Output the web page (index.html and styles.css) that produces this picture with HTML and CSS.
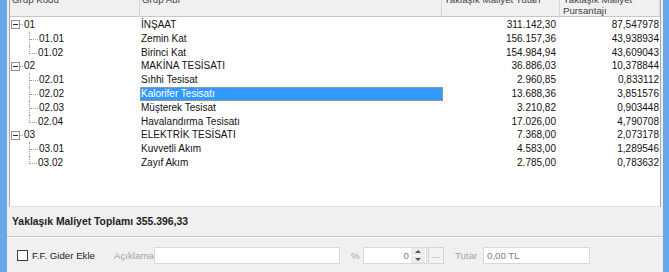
FILE: index.html
```html
<!DOCTYPE html>
<html lang="tr">
<head>
    <meta charset="UTF-8">
    <title>Yaklaşık Maliyet</title>
    <link rel="stylesheet" href="styles.css">
</head>
<body>
    <div class="window">
        <div class="tree-box">
            <div class="grid-head">
                <div class="hcell">Grup Kodu</div>
                <div class="hcell">Grup Adı</div>
                <div class="hcell">Yaklaşık Maliyet Tutarı</div>
                <div class="hcell">Yaklaşık Maliyet<br>Pursantajı</div>
            </div>
            <div class="rows">
                <div class="row">
                    <div class="code"><span class="exp"><span class="minus"></span></span><span class="stub"></span>01</div>
                    <div class="name">İNŞAAT</div>
                    <div class="num">311.142,30</div>
                    <div class="pct">87,547978</div>
                </div>
                <div class="row">
                    <div class="code"><span class="branch mid"><span class="up"></span></span>01.01</div>
                    <div class="name">Zemin Kat</div>
                    <div class="num">156.157,36</div>
                    <div class="pct">43,938934</div>
                </div>
                <div class="row">
                    <div class="code"><span class="branch last"><span class="up"></span></span>01.02</div>
                    <div class="name">Birinci Kat</div>
                    <div class="num">154.984,94</div>
                    <div class="pct">43,609043</div>
                </div>
                <div class="row">
                    <div class="code"><span class="exp"><span class="minus"></span></span><span class="stub"></span>02</div>
                    <div class="name">MAKİNA TESİSATI</div>
                    <div class="num">36.886,03</div>
                    <div class="pct">10,378844</div>
                </div>
                <div class="row">
                    <div class="code"><span class="branch mid"><span class="up"></span></span>02.01</div>
                    <div class="name">Sıhhi Tesisat</div>
                    <div class="num">2.960,85</div>
                    <div class="pct">0,833112</div>
                </div>
                <div class="row">
                    <div class="code"><span class="branch mid"><span class="up"></span></span>02.02</div>
                    <div class="name sel">Kalorifer Tesisatı</div>
                    <div class="num">13.688,36</div>
                    <div class="pct">3,851576</div>
                </div>
                <div class="row">
                    <div class="code"><span class="branch mid"><span class="up"></span></span>02.03</div>
                    <div class="name">Müşterek Tesisat</div>
                    <div class="num">3.210,82</div>
                    <div class="pct">0,903448</div>
                </div>
                <div class="row">
                    <div class="code"><span class="branch last"><span class="up"></span></span>02.04</div>
                    <div class="name">Havalandırma Tesisatı</div>
                    <div class="num">17.026,00</div>
                    <div class="pct">4,790708</div>
                </div>
                <div class="row">
                    <div class="code"><span class="exp"><span class="minus"></span></span><span class="stub"></span>03</div>
                    <div class="name">ELEKTRİK TESİSATI</div>
                    <div class="num">7.368,00</div>
                    <div class="pct">2,073178</div>
                </div>
                <div class="row">
                    <div class="code"><span class="branch mid"><span class="up"></span></span>03.01</div>
                    <div class="name">Kuvvetli Akım</div>
                    <div class="num">4.583,00</div>
                    <div class="pct">1,289546</div>
                </div>
                <div class="row">
                    <div class="code"><span class="branch last"><span class="up"></span></span>03.02</div>
                    <div class="name">Zayıf Akım</div>
                    <div class="num">2.785,00</div>
                    <div class="pct">0,783632</div>
                </div>
            </div>
        </div>

        <div class="summary">Yaklaşık Maliyet Toplamı 355.396,33</div>

        <div class="bottom-bar">
            <label class="check-field"><span class="checkbox"></span>F.F. Gider Ekle</label>
            <span class="lbl lbl-aciklama">Açıklama</span>
            <div class="field field-aciklama"></div>
            <span class="lbl lbl-pct">%</span>
            <div class="spin">
                <div class="spin-value">0</div>
                <div class="spin-btns">
                    <span class="spin-up"></span>
                    <span class="spin-down"></span>
                </div>
            </div>
            <div class="dots">...</div>
            <span class="lbl lbl-tutar">Tutar</span>
            <div class="field field-tutar">0,00 TL</div>
        </div>
    </div>
</body>
</html>
```

FILE: styles.css
```css
html, body {
    margin: 0;
    width: 669px;
    height: 272px;
    overflow: hidden;
    background-color: #f0f0f0;
}

body {
    font-family: "Liberation Sans", Arial, sans-serif;
    font-size: 9.7px;
    color: #111;
}

.window {
    display: flex;
    flex-direction: column;
    height: 290px;
    margin-top: -8px;
    border-left: 7px solid #6aa7ea;
    border-right: 6px solid #6aa7ea;
}

.tree-box {
    margin: 0 2px;
    height: 215px;
    box-sizing: border-box;
    border: 1px solid #a9a9a9;
    border-bottom-color: #e2e2e2;
    background-color: #fff;
}

.grid-head,
.row {
    display: grid;
    grid-template-columns: 130px 302px 118px 100px;
}

.grid-head {
    height: 23px;
    background-color: #f0f0f0;
    border-bottom: 1px solid #c8c8c8;
    color: #444;
}

.hcell {
    padding: 1px 0 0 2px;
    line-height: 11px;
    border-right: 1px solid #d6d6d6;
    white-space: nowrap;
    overflow: hidden;
}

.hcell:nth-child(4) {
    padding-left: 3px;
}

.rows {
    padding-top: 1px;
    font-size: 10px;
}

.row {
    height: 13.8px;
    line-height: 13.8px;
    white-space: nowrap;
}

.code {
    display: flex;
    align-items: stretch;
}

.exp {
    align-self: center;
    display: flex;
    align-items: center;
    justify-content: center;
    width: 7px;
    height: 7px;
    margin-left: 1px;
    border: 1px solid #909090;
    background-color: #fff;
}

.minus {
    width: 5px;
    height: 1px;
    background-color: #222;
}

.stub {
    align-self: center;
    width: 3px;
    margin-right: 1px;
    border-top: 1px dotted #a0a0a0;
}

.branch {
    display: flex;
    flex-direction: column;
    width: 8px;
    margin-left: 19px;
    margin-right: 1px;
}

.branch .up {
    height: 7px;
    border-bottom: 1px dotted #a0a0a0;
}

.branch.mid {
    border-left: 1px dotted #a0a0a0;
}

.branch.last .up {
    border-left: 1px dotted #a0a0a0;
}

.name {
    padding-left: 1px;
    overflow: hidden;
}

.name.sel {
    margin-right: -1px;
    background-color: #3399ff;
    color: #fff;
    outline: 1px dotted #d39b5e;
    outline-offset: -1px;
}

.num {
    text-align: right;
    padding-right: 4px;
}

.pct {
    text-align: right;
    padding-right: 1px;
}

.summary {
    display: flex;
    align-items: center;
    height: 29px;
    padding-left: 5px;
    font-size: 10.4px;
    font-weight: bold;
    color: #222;
}

.bottom-bar {
    display: flex;
    align-items: center;
    height: 18px;
    padding-top: 9px;
    border-top: 1px solid #cacaca;
    box-shadow: inset 0 1px #fbfbfb;
}

.check-field {
    display: flex;
    align-items: center;
    gap: 4px;
    width: 97px;
    margin-left: 10px;
    color: #222;
}

.checkbox {
    width: 9px;
    height: 9px;
    border: 1px solid #3c3c3c;
    background-color: #fff;
}

.lbl {
    color: #a5a5a5;
    box-sizing: border-box;
}

.lbl-aciklama {
    width: 40px;
    padding-left: 0;
}

.lbl-pct {
    width: 23px;
    padding-left: 11px;
}

.lbl-tutar {
    width: 39px;
    padding-left: 11px;
}

.field {
    height: 17px;
    box-sizing: border-box;
    border: 1px solid #d9d9d9;
    background-color: #fff;
    line-height: 15px;
    padding-left: 3px;
    color: #808080;
}

.field-aciklama {
    width: 186px;
}

.field-tutar {
    width: 107px;
}

.spin {
    display: flex;
    width: 64px;
    height: 17px;
    box-sizing: border-box;
    border: 1px solid #d9d9d9;
    background-color: #fff;
}

.spin-value {
    flex: 1;
    text-align: right;
    padding-right: 2px;
    line-height: 15px;
    color: #808080;
}

.spin-btns {
    display: flex;
    flex-direction: column;
    gap: 1px;
    width: 14px;
    margin: 0 1px 0 0;
}

.spin-up,
.spin-down {
    flex: 1;
    display: flex;
    align-items: center;
    justify-content: center;
    background-color: #ececec;
}

.spin-up::before {
    content: "";
    border-left: 3px solid transparent;
    border-right: 3px solid transparent;
    border-bottom: 3px solid #555;
}

.spin-down::before {
    content: "";
    border-left: 3px solid transparent;
    border-right: 3px solid transparent;
    border-top: 3px solid #555;
}

.dots {
    width: 16px;
    height: 17px;
    margin-left: 1px;
    box-sizing: border-box;
    border: 1px solid #d4d4d4;
    background-color: #f2f2f2;
    color: #909090;
    text-align: center;
    line-height: 13px;
}
```
